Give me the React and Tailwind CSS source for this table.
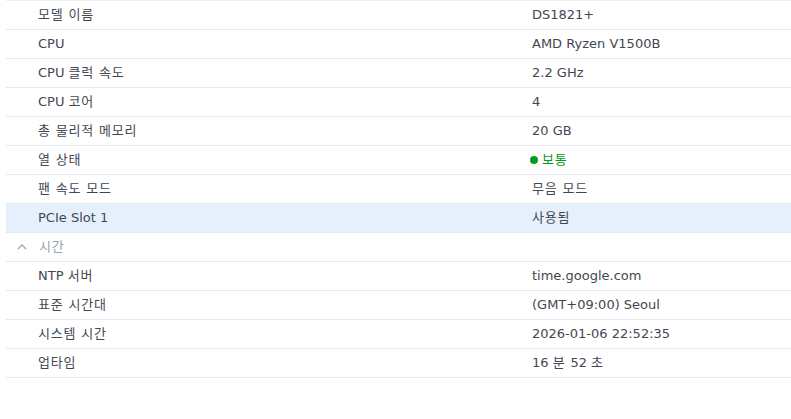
import React from 'react';

const hwRows = [
  { label: '모델 이름', value: 'DS1821+' },
  { label: 'CPU', value: 'AMD Ryzen V1500B' },
  { label: 'CPU 클럭 속도', value: '2.2 GHz' },
  { label: 'CPU 코어', value: '4' },
  { label: '총 물리적 메모리', value: '20 GB' },
  { label: '열 상태', value: '보통', status: true },
  { label: '팬 속도 모드', value: '무음 모드' },
  { label: 'PCIe Slot 1', value: '사용됨', selected: true },
];

const timeRows = [
  { label: 'NTP 서버', value: 'time.google.com' },
  { label: '표준 시간대', value: '(GMT+09:00) Seoul' },
  { label: '시스템 시간', value: '2026-01-06 22:52:35' },
  { label: '업타임', value: '16 분 52 초' },
];

const font = { fontFamily: '"DejaVu Sans", "Noto Sans CJK KR", sans-serif' };

// hangul in the reference sits a little looser than Noto CJK, so space those runs out
const Txt = ({ children }) => {
  const parts = String(children).split(/([\uac00-\ud7a3][\uac00-\ud7a3 ]*)/);
  return parts.map((part, i) =>
    /[\uac00-\ud7a3]/.test(part) ? (
      <span key={i} className="tracking-[0.8px]">
        {part}
      </span>
    ) : (
      part
    )
  );
};

function Row({ row }) {
  return (
    <div
      className={`grid grid-cols-[494px_1fr] h-[29px] items-center border-b border-[#e6e9ec] text-[13px] text-[#3f4852] ${
        row.selected ? 'bg-[#e6f0fc]' : ''
      }`}
    >
      <div className="pl-8">
        <Txt>{row.label}</Txt>
      </div>
      <div className="pl-8">
        {row.status ? (
          <span className="flex items-center gap-[4px] text-[#0b9a1f] -ml-[2px]">
            <span className="w-[8px] h-[8px] rounded-full bg-[#0b9a1f]" />
            <Txt>{row.value}</Txt>
          </span>
        ) : (
          <Txt>{row.value}</Txt>
        )}
      </div>
    </div>
  );
}

export default function App() {
  return (
    <div className="bg-white min-h-screen w-[791px] h-[419px]" style={font}>
      <div className="ml-[6px] border-t border-[#eef0f2]">
        {hwRows.map((row) => (
          <Row key={row.label} row={row} />
        ))}
        <div className="h-[29px] flex items-center border-b border-[#e6e9ec] text-[13px] text-[#9aa1a8]">
          <svg width="12" height="12" viewBox="0 0 12 12" className="ml-[10px] mr-[11px]">
            <path d="M2 8 L6 4 L10 8" fill="none" stroke="#a0a7ae" strokeWidth="1.3" />
          </svg>
          <Txt>시간</Txt>
        </div>
        {timeRows.map((row) => (
          <Row key={row.label} row={row} />
        ))}
      </div>
    </div>
  );
}
